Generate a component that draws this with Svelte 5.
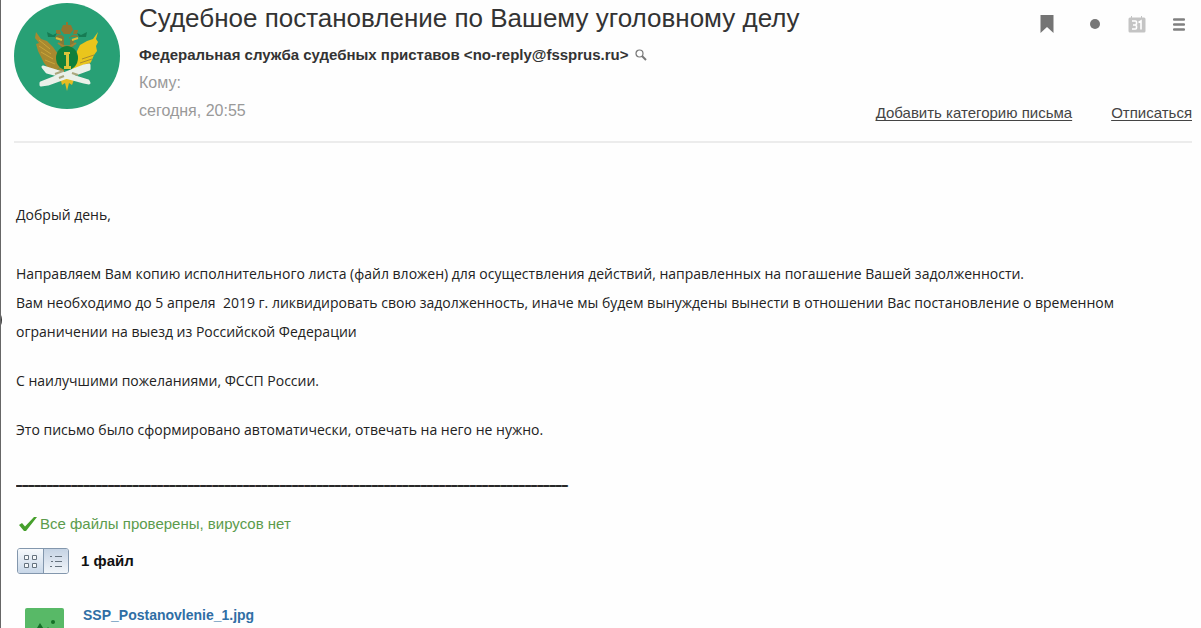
<script>
  let view = $state('list');
  const separator = '_'.repeat(90);
</script>

<main class="mail">
  <span class="edge-handle" aria-hidden="true"></span>

  <header class="head">
    <svg class="avatar" viewBox="0 0 106 106" aria-hidden="true">
      <circle cx="53" cy="53" r="53" fill="#28a075" />
      <g fill="#a8892f">
        <path d="M22 29 L27 36 L33 38 L39 44 L44 51 L46 64 L42 68 L34 65 L30 60 L27 54 L24 48 L22 41 L25 40 L21 35 Z" />
        <path d="M44 66 L50 63 L50 75 L46 79 L43 73 Z" />
      </g>
      <g fill="#eac51c">
        <path d="M84 29 L79 36 L73 38 L66 42 L61 52 L60 65 L65 68 L72 65 L77 59 L80 52 L83 48 L82 43 L84 39 L82 36 Z" />
        <path d="M58 49 l10 3 l-2 12 l-8 4 z" />
      </g>
      <path d="M25 37l11 9M25 43l12 8M27 49l12 7M31 57l10 4" stroke="#c9a63a" stroke-width="1" fill="none" />
      <path d="M66 60l12-4M65 64l11-4M68 56l12-4" stroke="#a98b2e" stroke-width="1" fill="none" />
      <path d="M41 34q5-5 9 0v12l-4-3v-6q-4 1-5-3zM65 34q-5-5-9 0v12l4-3v-6q-4 1-5-3z" fill="#817b39" />
      <path d="M42 35l6 2M64 35l-6 2" stroke="#dfbd3a" stroke-width="2" />
      <path d="M49 22h8l2 5-3 4h-6l-3-4zM52 19h2v4h-2zM42 27h4l1 4h-5zM60 27h4l-1 4h-4z" fill="#93752f" />
      <path d="M33 29l6 3 4-2-2 4h-7zM73 29l-6 3-4-2 2 4h7z" fill="#167c54" />
      <path d="M44 40q9 7 18 0" stroke="#a78332" stroke-width="2" fill="none" />
      <ellipse cx="53" cy="55" rx="11" ry="12" fill="#10803b" />
      <path d="M50 49h6v2h-1v12h2v3h-7v-3h2V52h-2z" fill="#dbc43a" />
      <path d="M46 74l2 8 3-2 2 8 2-8 3 2 3-8z" fill="#e3bc22" />
      <path d="M29 64L74 78L75 80L70 79L33 69ZM27 80L70 63L75 62L75 66L34 81L27 82Z" fill="#eaf0e9" stroke="#eaf0e9" stroke-width="3" stroke-linejoin="round" />
      <path d="M41 71l8-3M45 75l5-2M58 70l6 2" stroke="#aaa67c" stroke-width="2" />
    </svg>

    <div class="summary">
      <h1>Судебное постановление по Вашему уголовному делу</h1>
      <p class="sender">
        <span>Федеральная служба судебных приставов &lt;no-reply@fssprus.ru&gt;</span>
        <button class="plain" aria-label="Найти письма отправителя">
          <svg width="12" height="12" viewBox="0 0 12 12" fill="none" stroke="#777" aria-hidden="true">
            <circle cx="4.5" cy="4.5" r="3.5" stroke-width="1.2" /><path d="M7 7l4 4" stroke-width="2" />
          </svg>
        </button>
      </p>
      <p class="meta">Кому:</p>
      <p class="meta">сегодня, 20:55</p>
    </div>

    <div class="side">
      <div class="tools">
        <button class="plain bookmark" aria-label="Добавить закладку">
          <svg width="14" height="18" viewBox="0 0 14 18" aria-hidden="true"><path d="M0.5 0h13v18L7 12 0.5 18z" fill="#747474" /></svg>
        </button>
        <button class="plain" aria-label="Пометить непрочитанным">
          <svg width="10" height="10" viewBox="0 0 10 10" aria-hidden="true"><circle cx="5" cy="5" r="5" fill="#777" /></svg>
        </button>
        <button class="plain" aria-label="Добавить в календарь">
          <svg width="18" height="17" viewBox="0 0 18 17" aria-hidden="true">
            <path d="M2 1.500h1V0h1v1.500h9V0h1v1.500h2q1.500 0 1.500 1.500v12q0 1.500-1.500 1.500H2q-1.500 0-1.500-1.500V3q0-1.500 1.500-1.500z" fill="#c4c4c4" />
            <path d="M4 5h3.500q1 0 1 1v2l-1 1 1 1v2q0 1-1 1H4M5 9h2.500M10.500 6.500L13 5v8.500" fill="none" stroke="#fff" stroke-width="1.6" />
          </svg>
        </button>
        <button class="plain" aria-label="Меню">
          <svg width="12" height="13" viewBox="0 0 12 13" aria-hidden="true"><path d="M1 1.500h10M1 6.500h10M1 11.500h10" stroke="#808080" stroke-width="2.300" stroke-linecap="round" /></svg>
        </button>
      </div>
      <nav class="links">
        <a href="#category">Добавить категорию письма</a>
        <a href="#unsubscribe">Отписаться</a>
      </nav>
    </div>
  </header>

  <article class="body">
    <p class="greeting">Добрый день,</p>
    <p>
      Направляем Вам копию исполнительного листа (файл вложен) для осуществления действий, направленных на погашение Вашей задолженности.<br />
      Вам необходимо до 5 апреля&nbsp; 2019 г. ликвидировать свою задолженность, иначе мы будем вынуждены вынести в отношении Вас постановление о временном ограничении на выезд из Российской Федерации
    </p>
    <p>С наилучшими пожеланиями, ФССП России.</p>
    <p>Это письмо было сформировано автоматически, отвечать на него не нужно.</p>
    <p class="separator">{separator}</p>
  </article>

  <section class="attachments">
    <p class="checked">
      <svg width="18" height="14" viewBox="0 0 18 14" aria-hidden="true"><path d="M0 8l3-2 3 3.500L15 0h3L7 14H5z" fill="#46a02c" /></svg>
      <span>Все файлы проверены, вирусов нет</span>
    </p>
    <div class="bar">
      <div class="switch">
        <button class:on={view === 'grid'} onclick={() => (view = 'grid')} aria-label="Плитка">
          <svg width="13" height="13" viewBox="0 0 13 13" fill="#f5f8fa" stroke="#65727e" aria-hidden="true">
            <path d="M.5 .5h4v4h-4zM8.500 .5h4v4h-4zM.5 8.500h4v4h-4zM8.500 8.500h4v4h-4z" />
          </svg>
        </button>
        <button class:on={view === 'list'} onclick={() => (view = 'list')} aria-label="Список">
          <svg width="13" height="13" viewBox="0 0 13 13" stroke="#65727e" aria-hidden="true">
            <path d="M5 1.500h7M5 6.500h7M5 11.500h7M0 1.500h2M1 6.500h2M0 11.500h2" />
          </svg>
        </button>
      </div>
      <h2>1 файл</h2>
    </div>
    <div class="file">
      <svg class="thumb" width="39" height="40" viewBox="0 0 39 40" aria-hidden="true">
        <rect width="39" height="40" rx="2" fill="#58b967" />
        <circle cx="28" cy="14" r="2" fill="#147027" />
        <path d="M6 30L15 15l5 8 3-4 9 11z" fill="#147027" />
      </svg>
      <a href="#file">SSP_Postanovlenie_1.jpg</a>
    </div>
  </section>
</main>

<style>
  :global(body) {
    margin: 0;
    background: #fefefe;
  }
  .mail {
    position: relative;
    box-sizing: border-box;
    height: 100vh;
    overflow: hidden;
    padding: 0 9px 0 13px;
    border-left: 1px solid #666;
    font-family: "Liberation Sans", Arial, sans-serif;
    font-size: 15px;
    color: #333;
  }
  .edge-handle {
    position: absolute;
    left: -8px;
    top: 312px;
    width: 9px;
    height: 16px;
    border-radius: 50%;
    background: #333;
  }
  h1, h2, p {
    margin: 0;
  }
  .plain {
    display: flex;
    justify-content: center;
    padding: 0;
    border: 0;
    background: none;
    cursor: pointer;
  }
  .head {
    display: flex;
    align-items: flex-start;
    padding: 3px 0 16px;
    border-bottom: 2px solid #ececec;
  }
  .avatar {
    flex: none;
    width: 106px;
    height: 106px;
    margin-right: 19px;
  }
  .summary {
    flex: 1;
    min-width: 0;
  }
  h1 {
    font-size: 26px;
    line-height: 30px;
    font-weight: 400;
    white-space: nowrap;
  }
  .sender {
    display: flex;
    align-items: center;
    gap: 6px;
    padding-top: 8px;
    font-weight: 700;
    line-height: 28px;
    white-space: nowrap;
  }
  .meta {
    font-size: 16px;
    line-height: 28px;
    color: #999;
  }
  .side {
    display: flex;
    flex-direction: column;
    align-items: flex-end;
    align-self: stretch;
    justify-content: space-between;
  }
  .tools {
    display: flex;
    align-items: center;
    gap: 24px;
    padding: 12px 4px 0 0;
  }
  .tools button {
    width: 18px;
  }
  .tools .bookmark {
    margin-right: 6px;
  }
  .links {
    display: flex;
    gap: 39px;
    padding-bottom: 2px;
    line-height: 20px;
    white-space: nowrap;
  }
  .links a {
    color: #444;
    text-underline-offset: 2px;
    text-decoration-skip-ink: none;
  }
  .body {
    padding: 57px 0 0 2px;
    font-family: "Open Sans", "Noto Sans", sans-serif;
    font-size: 14px;
    line-height: 29px;
    color: #222;
  }
  .body p {
    margin-bottom: 20px;
  }
  .body .greeting {
    margin-bottom: 30px;
  }
  .body .separator {
    margin-bottom: 19px;
    overflow: hidden;
    text-shadow: 0 1px currentColor;
  }
  .attachments {
    padding-left: 3px;
  }
  .checked {
    display: flex;
    align-items: center;
    gap: 3px;
    padding-left: 2px;
    line-height: 24px;
    color: #5b9b4c;
  }
  .bar {
    display: flex;
    align-items: center;
    gap: 12px;
    margin-top: 12px;
  }
  .switch {
    display: flex;
    border: 1px solid #8397ad;
    border-radius: 3px;
    overflow: hidden;
  }
  .switch button {
    display: grid;
    place-items: center;
    width: 25px;
    height: 24px;
    padding: 0;
    border: 0;
    background: linear-gradient(#f6f9fc, #c8d7e8);
  }
  .switch button + button {
    border-left: 1px solid #8397ad;
  }
  .switch .on {
    background: linear-gradient(#c5d3e4, #f2f6fa);
  }
  h2 {
    font-size: 15px;
    line-height: 20px;
    color: #111;
  }
  .file {
    display: flex;
    gap: 19px;
    padding: 34px 0 0 8px;
  }
  .file a {
    color: #2f6ea5;
    font-size: 14px;
    font-weight: 700;
    line-height: 14px;
    text-decoration: none;
  }
</style>
